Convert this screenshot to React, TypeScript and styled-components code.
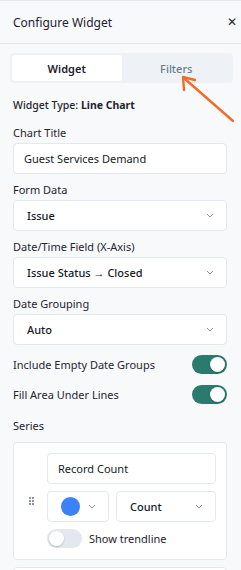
import { FC } from "react";
import styled, { createGlobalStyle } from "styled-components";

const GlobalStyle = createGlobalStyle`
  html, body {
    margin: 0;
    padding: 0;
    background: #f8f9fb;
  }
  body {
    font-family: "Noto Sans", "Open Sans", sans-serif;
    color: #1f2430;
  }
`;

const Panel = styled.div`
  position: relative;
  width: 241px;
  height: 570px;
  overflow: hidden;
  background: #f8f9fb;
  border-top: 1px solid #e6e9ef;
  box-sizing: border-box;
`;

const Header = styled.div`
  display: flex;
  align-items: center;
  justify-content: space-between;
  height: 43px;
  padding: 0 4px 0 13px;
  border-bottom: 1px solid #e3e7ee;
  box-sizing: border-box;
`;

const Title = styled.span`
  font-size: 12px;
  font-weight: 400;
  color: #1c2030;
`;

const CloseButton = styled.span`
  font-size: 12px;
  color: #222;
  line-height: 1;
`;

const Body = styled.div`
  display: flex;
  flex-direction: column;
  padding: 9px 14px 0 13px;
`;

const Tabs = styled.div`
  display: flex;
  margin: 0 -6px 0 -3px;
  padding: 2px;
  background: #eef2f7;
  border-radius: 4px;
`;

const Tab = styled.div<{ $active?: boolean }>`
  flex: 1;
  height: 26px;
  display: flex;
  align-items: center;
  justify-content: center;
  font-size: 11px;
  font-weight: ${(p) => (p.$active ? 600 : 500)};
  color: ${(p) => (p.$active ? "#1c2030" : "#6b7a90")};
  background: ${(p) => (p.$active ? "#ffffff" : "transparent")};
  border-radius: 3px;
`;

const WidgetType = styled.div`
  margin-top: 15px;
  font-size: 10.5px;
  line-height: 14px;
  font-weight: 500;
  b {
    font-weight: 700;
  }
`;

const Label = styled.div<{ $top?: number; $bottom?: number }>`
  margin-top: ${(p) => p.$top ?? 8}px;
  margin-bottom: ${(p) => p.$bottom ?? 3}px;
  font-size: 11px;
  line-height: 15px;
  color: #1f2430;
`;

const Field = styled.div<{ $pad?: number; $weight?: number }>`
  display: flex;
  align-items: center;
  justify-content: space-between;
  height: 31px;
  padding: 0 12px 0 ${(p) => p.$pad ?? 13}px;
  background: #ffffff;
  border: 1px solid #e4e8ef;
  border-radius: 4px;
  box-sizing: border-box;
  font-size: 11px;
  font-weight: ${(p) => p.$weight ?? 400};
  color: #161a24;
`;

const Chevron: FC = () => (
  <svg width="8" height="5" viewBox="0 0 8 5" fill="none">
    <path d="M1 1l3 3 3-3" stroke="#8a93a3" strokeWidth="1" />
  </svg>
);

const ToggleRow = styled.div`
  display: flex;
  align-items: center;
  justify-content: space-between;
  margin-top: 10px;
  font-size: 11px;
  & + & {
    margin-top: 11px;
  }
`;

const Switch = styled.div<{ $on?: boolean }>`
  position: relative;
  width: 35px;
  height: 19px;
  border-radius: 10px;
  background: ${(p) => (p.$on ? "#2b7a6e" : "#e3e7ee")};
  flex: none;
  &::after {
    content: "";
    position: absolute;
    top: 2px;
    left: ${(p) => (p.$on ? "18px" : "2px")};
    width: 15px;
    height: 15px;
    border-radius: 50%;
    background: #fff;
    box-shadow: 0 1px 2px rgba(0, 0, 0, 0.2);
  }
`;

const SeriesCard = styled.div`
  display: flex;
  align-items: center;
  gap: 13px;
  padding: 10px 10px 11px 15px;
  background: #ffffff;
  border: 1px solid #e4e8ef;
  border-radius: 4px;
`;

const NextCard = styled.div`
  height: 20px;
  margin-top: 7px;
  background: #ffffff;
  border: 1px solid #e4e8ef;
  border-radius: 4px;
`;

const SeriesBody = styled.div`
  flex: 1;
  display: flex;
  flex-direction: column;
  gap: 7px;
`;

const SeriesRow = styled.div`
  display: flex;
  gap: 7px;
  & > *:first-child {
    flex: 0 0 62px;
  }
  & > *:last-child {
    flex: 1;
  }
`;

const ColorDot = styled.span`
  width: 19px;
  height: 19px;
  border-radius: 50%;
  background: #3b82f6;
`;

const TrendRow = styled.div`
  display: flex;
  align-items: center;
  gap: 7px;
  font-size: 11px;
`;

const Grip: FC = () => (
  <svg width="5" height="8" viewBox="0 0 5 8" style={{ flex: "none" }}>
    {[0, 3, 6].map((y) =>
      [0, 3].map((x) => <rect key={`${x}-${y}`} x={x} y={y} width="2" height="2" fill="#8a93a3" />)
    )}
  </svg>
);

const Arrow: FC = () => (
  <svg
    width="241"
    height="570"
    style={{ position: "absolute", left: 0, top: 0, pointerEvents: "none" }}
  >
    <line x1="233" y1="120" x2="185" y2="78" stroke="#f26b2a" strokeWidth="2.4" strokeLinecap="round" />
    <path d="M183 76 L184 89 M183 76 L195 79" stroke="#f26b2a" strokeWidth="2.4" strokeLinecap="round" fill="none" />
  </svg>
);

const App: FC = () => {
  return (
    <>
      <GlobalStyle />
      <Panel>
        <Header>
          <Title>Configure Widget</Title>
          <CloseButton>✕</CloseButton>
        </Header>
        <Body>
          <Tabs>
            <Tab $active>Widget</Tab>
            <Tab>Filters</Tab>
          </Tabs>
          <WidgetType>
            Widget Type: <b>Line Chart</b>
          </WidgetType>

          <Label $top={13}>Chart Title</Label>
          <Field $pad={10}>Guest Services Demand</Field>

          <Label>Form Data</Label>
          <Field $weight={500}>
            Issue
            <Chevron />
          </Field>

          <Label>Date/Time Field (X-Axis)</Label>
          <Field $weight={500}>
            Issue Status → Closed
            <Chevron />
          </Field>

          <Label>Date Grouping</Label>
          <Field $weight={500}>
            Auto
            <Chevron />
          </Field>

          <ToggleRow>
            Include Empty Date Groups
            <Switch $on />
          </ToggleRow>
          <ToggleRow>
            Fill Area Under Lines
            <Switch $on />
          </ToggleRow>

          <Label $top={14} $bottom={9}>Series</Label>
          <SeriesCard>
            <Grip />
            <SeriesBody>
              <Field $pad={10}>Record Count</Field>
              <SeriesRow>
                <Field $pad={13}>
                  <ColorDot />
                  <Chevron />
                </Field>
                <Field $pad={13} $weight={500}>
                  Count
                  <Chevron />
                </Field>
              </SeriesRow>
              <TrendRow>
                <Switch />
                Show trendline
              </TrendRow>
            </SeriesBody>
          </SeriesCard>
          <NextCard />
        </Body>
        <Arrow />
      </Panel>
    </>
  );
};

export default App;
